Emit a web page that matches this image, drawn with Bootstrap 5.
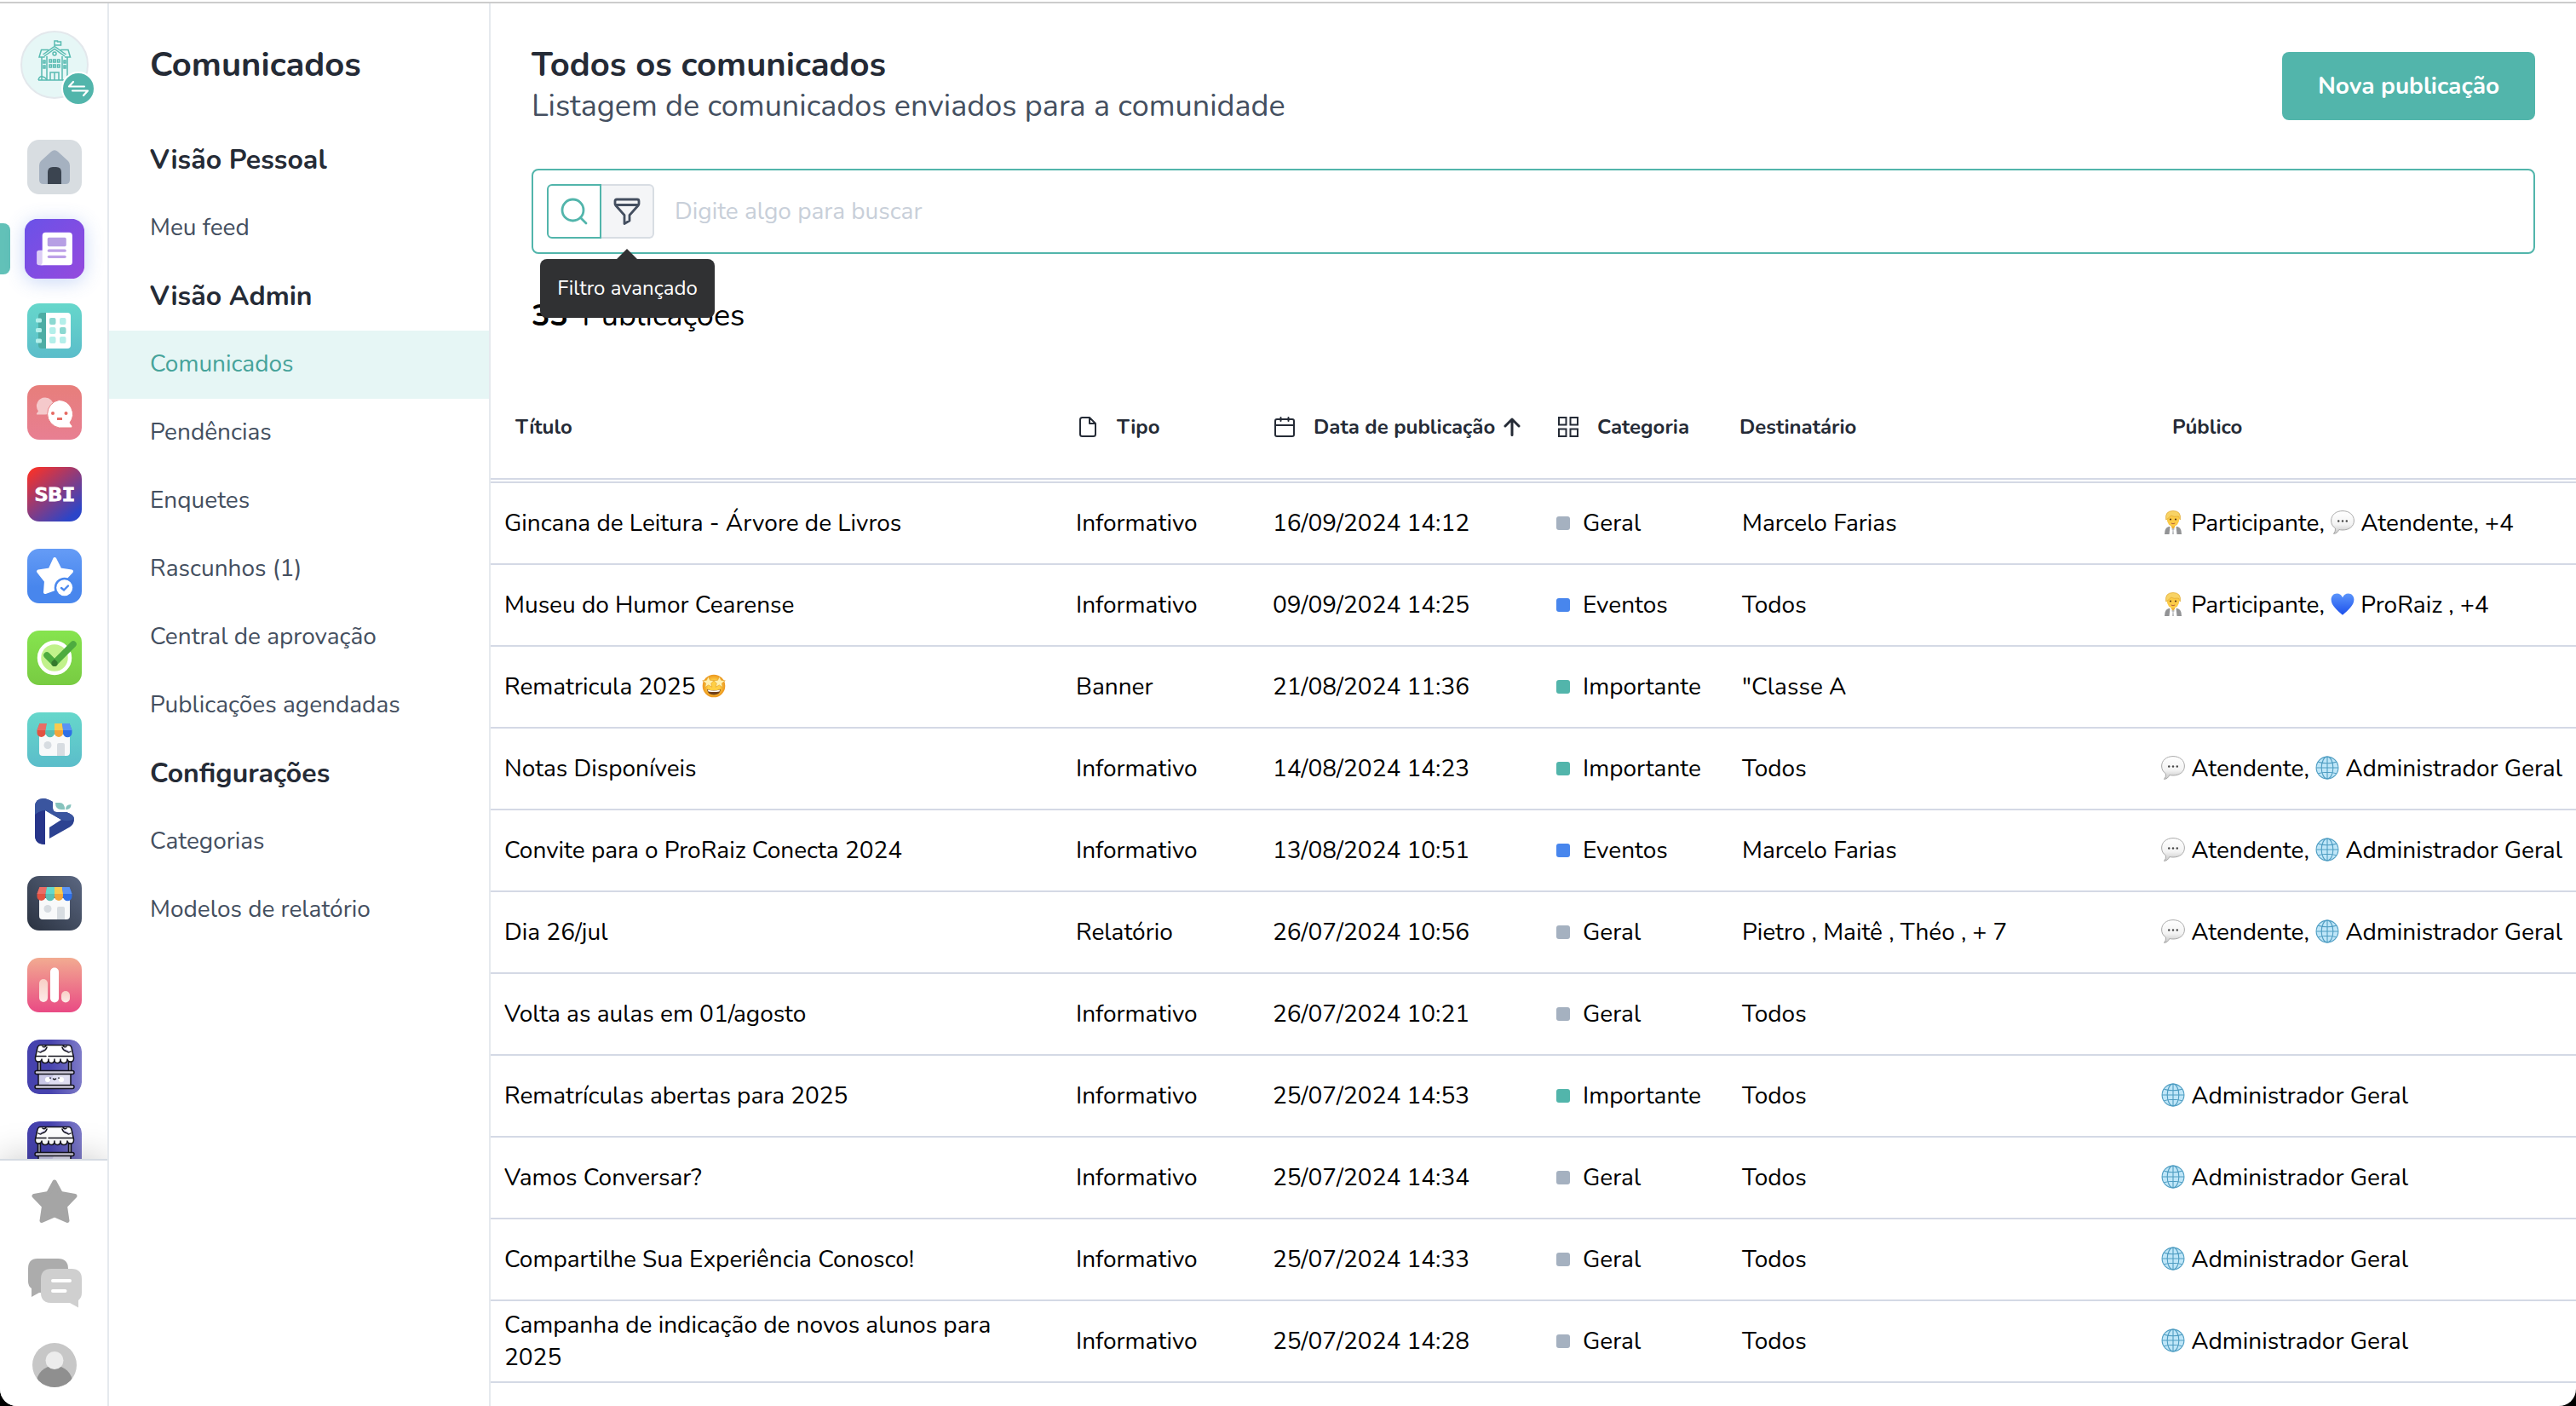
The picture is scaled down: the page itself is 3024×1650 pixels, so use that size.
<!DOCTYPE html>
<html lang="pt-BR">
<head>
<meta charset="utf-8">
<title>Comunicados</title>
<link href="https://cdn.jsdelivr.net/npm/bootstrap@5.3.0/dist/css/bootstrap.min.css" rel="stylesheet">
<style>
:root{--teal:#52b5ab;--ink:#252b36;--slate:#444f60;--line:#d4d9e5}
html,body{height:100%}
body{background:#000;font-family:Nunito,Lato,"Open Sans",sans-serif;font-size:28px;line-height:38px;color:#000;overflow:hidden}
svg{display:block;flex:none}
.app{height:1650px;background:#fff;border-radius:0 0 20px 20px;overflow:hidden;padding-top:2px}
.app-body{border-top:2px solid #ccc;height:100%}
.rail{width:128px;flex:none;border-right:2px solid #e5e9ee;overflow:hidden}
.school{width:80px;height:80px;margin:32px 0 48px 24px;background:#e6f7f6;border:2px solid #e3e8ec}
.swap{left:46px;top:46px;width:40px;height:40px;background:var(--teal);border:2px solid #fff}
.apps{gap:32px;padding-left:32px}
.tile{width:64px;height:64px;border-radius:14px}
.tile-on{transform:scale(1.1);box-shadow:0 3px 20px rgba(70,120,225,.3)}
.apps-wrap{height:1196px;overflow:hidden}
.marker{left:0;top:98px;width:12px;height:60px;background:#62c1b8;border-radius:0 8px 8px 0}
.rail-foot{flex:1;position:relative;border-top:2px solid #d5dbe2;background:#fff;box-shadow:0 0 40px rgba(0,0,0,.22);padding:22px 0 0 2px}
.foot-ic{margin-top:41px}
.side{width:448px;flex:none;border-right:2px solid #e5e9ee}
.side h1{font-size:40px;line-height:54px;font-weight:700;color:var(--ink);padding:45px 0 45px 48px;margin:0}
.side .nav-link{height:80px;line-height:78px;padding:0 0 0 48px;color:var(--slate)}
.side .grp{height:80px;line-height:79px;padding-left:48px;font-size:32px;font-weight:700;color:var(--ink)}
.side .nav-link.active{background:#e6f6f5;color:#46a39a}
.main-area{min-width:0}
.head{padding:44px 48px 0 48px;height:142px}
.head h2{font-size:40px;line-height:54px;font-weight:700;color:var(--ink);margin:1px 0 0}
.head p{font-size:36px;line-height:44px;color:var(--slate);margin:0}
.btn-new{background:var(--teal);color:#fff;font-size:28px;font-weight:700;width:297px;height:80px;border-radius:8px;margin-top:13px}
.search{margin:52px 48px 0;height:100px;border:2px solid var(--teal);border-radius:8px;padding:0 16px}
.sq{width:64px;height:64px;border:2px solid var(--teal);border-radius:6px 0 0 6px;background:#fff}
.sq-f{border-color:#d8dde3;border-left:0;border-radius:0 6px 6px 0;background:#f4f5f7;width:62px}
.ph{color:#c8cfd9;margin-left:24px}
.tip{left:-72px;top:86px;width:205px;height:69px;background:#303133;color:#fff;border-radius:8px;font-size:24px;line-height:68px;text-align:center;z-index:2}
.tip::before{content:"";position:absolute;left:90px;top:-12px;border:12px solid transparent;border-top:0;border-bottom-color:#303133}
.count{font-size:36px;line-height:48px;margin:49px 48px 0}
.count b{margin-right:16px}
.grid-t{table-layout:fixed;width:2448px;margin-top:55px;border-collapse:separate;border-spacing:0}
.grid-t th{height:117px;padding:0 0 9px 0;font-size:24px;font-weight:700;color:var(--ink);border-bottom:6px double var(--line);vertical-align:middle;white-space:nowrap}
.grid-t td{height:96px;padding:0 0 1px 16px;border-bottom:2px solid var(--line);vertical-align:middle;line-height:38px}
.grid-t td+td{white-space:nowrap}
.dot{width:16px;height:16px;border-radius:3px;margin-right:15px;flex:none}
.em{display:inline-block;width:28px;height:28px;vertical-align:-4px}
</style>
</head>
<body>
<svg width="0" height="0" class="position-absolute">
<defs>
<linearGradient id="gNews" x1="0" y1="0" x2="1" y2="1"><stop offset="0" stop-color="#6a52e8"/><stop offset="1" stop-color="#9549dd"/></linearGradient>
<linearGradient id="gTeal" x1="0" y1="0" x2="0" y2="1"><stop offset="0" stop-color="#66d7cb"/><stop offset="1" stop-color="#5bbdca"/></linearGradient>
<linearGradient id="gPink" x1="0" y1="0" x2="0" y2="1"><stop offset="0" stop-color="#e77e7b"/><stop offset="1" stop-color="#e87f92"/></linearGradient>
<linearGradient id="gSbi" x1=".1" y1="0" x2=".9" y2="1"><stop offset="0" stop-color="#fb3127"/><stop offset=".9" stop-color="#2c45c8"/></linearGradient>
<linearGradient id="gBlue" x1="0" y1="0" x2="0" y2="1"><stop offset="0" stop-color="#659cf6"/><stop offset=".7" stop-color="#4886ed"/></linearGradient>
<linearGradient id="gGreen" x1="0" y1="0" x2="0" y2="1"><stop offset="0" stop-color="#86e44e"/><stop offset="1" stop-color="#78cb42"/></linearGradient>
<linearGradient id="gDark" x1="1" y1="0" x2="0" y2="1"><stop offset="0" stop-color="#5b6781"/><stop offset="1" stop-color="#2a3240"/></linearGradient>
<linearGradient id="gChart" x1="0" y1="0" x2="0" y2="1"><stop offset="0" stop-color="#f2ab91"/><stop offset="1" stop-color="#e94a84"/></linearGradient>
<linearGradient id="gBar" x1="0" y1="0" x2="0" y2="1"><stop offset="0" stop-color="#f8cfc5"/><stop offset="1" stop-color="#fdebe8"/></linearGradient>
<linearGradient id="gStall" x1="0" y1="0" x2="1" y2="0"><stop offset=".4" stop-color="#4642ae"/><stop offset="1" stop-color="#7e7bc8"/></linearGradient>
<linearGradient id="gBub" x1="0" y1="0" x2="0" y2="1"><stop offset="0" stop-color="#fff"/><stop offset=".6" stop-color="#f3f3f3"/><stop offset="1" stop-color="#c4c4c4"/></linearGradient>
<linearGradient id="gHeart" x1="0" y1="0" x2="0" y2="1"><stop offset="0" stop-color="#5b95fb"/><stop offset="1" stop-color="#1c50ec"/></linearGradient>
<radialGradient id="gFace"><stop offset=".5" stop-color="#ffcf45"/><stop offset="1" stop-color="#ec961d"/></radialGradient>
<g id="shop">
 <path d="M14 26h36v21q0 4-4 4H18q-4 0-4-4z" fill="#f8f9fa"/>
 <circle cx="24" cy="38.5" r="4.5" fill="#d7dce1"/><path d="M35 38q0-2 2-2h5q2 0 2 2v13h-9z" fill="#d7dce1"/>
 <path d="M14.500 13H23L21.500 21v3a5 5 0 0 1-10 0v-3z" fill="#e25241"/><path d="M23 13h9v11a5 5 0 0 1-10.500 0v-3z" fill="#5abfb5"/><path d="M32 13h9l1 8v3a5 5 0 0 1-10 0z" fill="#f4a63b"/><path d="M41 13h8.500l3 8v3a5 5 0 0 1-10.500 0v-3z" fill="#2f6fe6"/>
 <path d="M14.500 13H23L21.500 21h-10z" fill="#e96d66"/><path d="M23 13h9v8H21.500z" fill="#64d8cc"/><path d="M32 13h9l1 8H32z" fill="#f8cb50"/><path d="M41 13h8.500l3 8H42z" fill="#5a93f5"/>
</g>
<g id="stall" stroke="#15151f" stroke-width="1.500" stroke-linejoin="round" stroke-linecap="round">
 <rect width="64" height="64" rx="14" fill="url(#gStall)" stroke="none"/>
 <path d="M12.500 26v12h3V26zM48.500 26v12h3V26z" fill="#a9a8b8"/>
 <rect x="13" y="40" width="38" height="14" fill="#c9c7e6"/><path d="M31 41h19v12H25z" fill="#dfdef2" stroke="none"/>
 <rect x="9" y="36.500" width="46" height="4" rx="2" fill="#cfcbdc"/><rect x="9" y="53.500" width="46" height="4" rx="2" fill="#cfcbdc"/>
 <path d="M15 6.500h34q2 0 3 3l2.500 11.500q.5 5-3.500 5-3.500 0-4-3 0 4.500-4 4.500T39 23q0 4.500-3.700 4.500T32 23q0 4.500-3.700 4.500T25 23q0 4.500-4 4.500T17 23q-.5 3-4 3-4 0-3.500-5L12 9.500q1-3 3-3z" fill="#fff"/>
 <path d="M10 19.500h12M25 19.500h29" fill="none"/>
 <path d="M13 14q3 2 4 0 5-1 6-5M18 8q2 2 4-1M51 14q-3 2-4 0-5-1-6-5M46 8q-2 2-4-1" fill="#d2cff0"/>
 <circle cx="24" cy="47" r="3" fill="#fff" stroke="none"/><circle cx="40" cy="47" r="3" fill="#fff" stroke="none"/>
 <path d="M27 45v.3M37 45v.3M30.500 46q1.500 1.500 3 0" fill="none"/>
</g>
<symbol id="ePerson" viewBox="0 0 28 28"><path d="M4 28q0-8 5-9h10q5 1 5 9z" fill="#929395"/><path d="M10.500 19h7l1 9h-9z" fill="#fff"/><path d="M14 20l-2 2 1.500 1-.5 5h2l-.5-5 1.500-1z" fill="#b9bbbe"/><path d="M12 16h4v4l-2 1.500-2-1.500z" fill="#eeb02f"/><ellipse cx="14" cy="10" rx="7.300" ry="8.700" fill="#fccb47"/><path d="M5.700 11Q4 .5 14 .5 24 .5 22.300 11l-1.800-4q-6 1-9-1-2 3-5.800 5z" fill="#f8d365" stroke="#dfa731" stroke-width=".7"/><circle cx="11" cy="10.500" r="1.100" fill="#5b3b13"/><circle cx="17" cy="10.500" r="1.100" fill="#5b3b13"/><path d="M11.800 15q2.200 1.500 4.400 0" stroke="#b5603a" fill="none"/></symbol>
<symbol id="eBub" viewBox="0 0 28 28"><path d="M14 .6c7.700 0 13.400 4.600 13.400 11.400S21.700 23 14 23c-1.500 0-3-.2-4.200-.5Q8 27 3.500 27.400 6 24.500 5.500 21 .6 17.700.6 12C.6 5.200 6.300.6 14 .6z" fill="url(#gBub)" stroke="#a9a9a9" stroke-width="1"/><circle cx="9.200" cy="12.500" r="1.200" fill="#444"/><circle cx="14" cy="12.500" r="1.200" fill="#444"/><circle cx="18.800" cy="12.500" r="1.200" fill="#444"/></symbol>
<symbol id="eGlobe" viewBox="0 0 28 28"><circle cx="14" cy="14" r="13.200" fill="#bfe6f8"/><g fill="none" stroke="#4f9dc2" stroke-width="1.100"><circle cx="14" cy="14" r="12.900"/><ellipse cx="14" cy="14" rx="6.800" ry="12.900"/><path d="M14 1.200v25.600M1.200 14h25.600M3.300 7.300q10.700 3 21.400 0M3.300 20.700q10.700-3 21.400 0"/></g></symbol>
<symbol id="eHeart" viewBox="0 0 28 28"><path d="M14 26.800C8 21.500.6 15.700.6 8.500.6 4.300 3.600 1.500 7.300 1.500c3 0 5.500 1.800 6.700 4.700 1.200-2.900 3.700-4.700 6.700-4.700 3.700 0 6.700 2.800 6.700 7 0 7.200-7.400 13-13.400 18.300z" fill="url(#gHeart)"/></symbol>
<symbol id="eStars" viewBox="0 0 28 28"><circle cx="14" cy="14" r="13.300" fill="url(#gFace)"/><path d="M6 18q8 2.500 16 0-1 6.500-8 6.500T6 18z" fill="#70401b"/><path d="M6.800 18.500q7.200 2 14.400 0l-.7 2q-6.500 1.200-13 0z" fill="#fff"/><g fill="#fff0b0" stroke="#e09a20" stroke-width=".6"><path d="M7.500 3l2 4.300 4.600.4-3.400 3.200 1.200 4.400-4.200-2.400-4 2.700.9-4.700L.7 7.800l4.700-.5z"/><path d="M20.500 3l-2 4.300-4.600.4 3.400 3.200-1.200 4.400 4.200-2.400 4 2.700-.9-4.700 3.900-3.100-4.700-.5z"/></g></symbol>
</defs>
</svg>

<div class="app">
<div class="app-body d-flex">
  <nav class="rail d-flex flex-column">
    <div class="school rounded-circle position-relative">
      <svg width="76" height="76" viewBox="0 0 76 76" fill="none" stroke="#58bbb1" stroke-width="1.500"><path d="M19 56h38M23 56V29l-3 0 2.500-8.500H31M53 56V29h3.500L54 20.500H45M19.500 29h7M50 29h7M29 56V28M47 56V28M26 28l12-8.500L50 28M24.500 26L38 16.500 51.500 26M38 17v-7h3.500v1h4v4H38"/><circle cx="38" cy="25" r="2"/><path d="M33 56v-9h10v9M38 47v9M32 32h2.500v3H32zM36.700 32h2.500v3h-2.500zM41.500 32H44v3h-2.500zM32 38h2.500v3H32zM36.700 38h2.500v3h-2.500zM41.500 38H44v3h-2.500zM25 33h2v3h-2zM49 33h2v3h-2zM25 39h2v3h-2zM49 39h2v3h-2z"/><path d="M19 56q1-5 5-4 4 1 5 4"/></svg>
      <div class="swap rounded-circle position-absolute d-flex align-items-center justify-content-center"><svg width="26" height="20" viewBox="0 0 26 20" fill="none" stroke="#fff" stroke-width="2.200" stroke-linecap="round" stroke-linejoin="round"><path d="M7 2L2 7.500h18M6 12.500h18L19 18"/></svg></div>
    </div>
    <div class="apps-wrap position-relative">
      <div class="marker position-absolute"></div>
      <div class="apps d-flex flex-column">
        <svg class="tile" viewBox="0 0 64 64"><rect width="64" height="64" fill="#d8dde1"/><path d="M14 30q0-3 2-5L28 14q4-3.500 8 0l12 11q2 2 2 5v17q0 5-5 5H19q-5 0-5-5z" fill="#a5b1c0"/><path d="M24 52V38q0-6 6-6h4q6 0 6 6v14z" fill="#3b4450"/></svg>
        <svg class="tile tile-on" viewBox="0 0 64 64"><rect width="64" height="64" fill="url(#gNews)"/><rect x="13" y="33.500" width="9" height="16" rx="2.500" fill="#dccdf6"/><path d="M19 18q0-3.500 3.500-3.500h25Q51 14.500 51 18v28q0 3.500-3.500 3.500H16.500Q19 49 19 46z" fill="#fff"/><rect x="24.500" y="20" width="20" height="9.500" rx="1.500" fill="#b79fe4"/><rect x="24.500" y="32.500" width="20" height="3" rx="1.500" fill="#bda0e8"/><rect x="24.500" y="39" width="20" height="3" rx="1.500" fill="#bda0e8"/></svg>
        <svg class="tile" viewBox="0 0 64 64"><rect width="64" height="64" fill="url(#gTeal)"/><path d="M17 11h5v42h-5q-4 0-4-4V15q0-4 4-4z" fill="#4dada4"/><path d="M22 11h25q4 0 4 4v34q0 4-4 4H22z" fill="#fff"/><g fill="#b4efea"><rect x="10" y="17.500" width="7" height="5" rx="1.500"/><rect x="10" y="29" width="7" height="5" rx="1.500"/><rect x="10" y="41.500" width="7" height="5" rx="1.500"/><rect x="38" y="17" width="7.500" height="8" rx="2"/><rect x="26" y="28" width="7.500" height="8" rx="2"/><rect x="26" y="39" width="7.500" height="8" rx="2"/><rect x="38" y="39" width="7.500" height="8" rx="2"/></g><rect x="26" y="17" width="7.500" height="8" rx="2" fill="#8cd8d1"/><rect x="38" y="28" width="7.500" height="8" rx="2" fill="#8cd8d1"/></svg>
        <svg class="tile" viewBox="0 0 64 64"><rect width="64" height="64" fill="url(#gPink)"/><path d="M21 14.500a10 10 0 0 1 0 20H12q-2 0-.5-2l1.500-2A10 10 0 0 1 21 14.500z" fill="#f5c9cb"/><path d="M37.300 17.500a16.500 16.500 0 0 0 0 32.500H52q2-.5.500-2.500L50 44A16.500 16.500 0 0 0 37.300 17.500z" fill="#fff" stroke="#e77e83" stroke-width="1"/><circle cx="30" cy="33" r="2" fill="#e66a62"/><circle cx="45.500" cy="33" r="2" fill="#e66a62"/><rect x="35" y="38" width="6" height="3" rx=".5" fill="#e66a62"/></svg>
        <svg class="tile" viewBox="0 0 64 64"><rect width="64" height="64" fill="url(#gSbi)"/><text x="8.500" y="40" font-family="DejaVu Sans Mono" font-weight="700" font-size="22" textLength="48" lengthAdjust="spacingAndGlyphs" fill="#fff" stroke="#fff" stroke-width=".8">SBI</text></svg>
        <svg class="tile" viewBox="0 0 64 64"><rect width="64" height="64" fill="url(#gBlue)"/><path d="M32.200 12l6.300 12.500L52 26.500l-9 9.500-4 10-7 1-11 4L22 38 13 26.500l13.500-2z" fill="#fff" stroke="#fff" stroke-width="4" stroke-linejoin="round"/><circle cx="43.700" cy="45.700" r="12" fill="#4a88ee"/><circle cx="43.700" cy="45.700" r="9.500" fill="#fff"/><path d="M40 46l3 2.500 5-5" fill="none" stroke="#4a88ee" stroke-width="2.400" stroke-linecap="round"/></svg>
        <svg class="tile" viewBox="0 0 64 64"><rect width="64" height="64" fill="url(#gGreen)"/><circle cx="32" cy="32" r="18" fill="#c1f28b" stroke="#fff" stroke-width="4.500"/><path d="M23 29l9 9 22-22" fill="none" stroke="#4dab3f" stroke-width="7.500" stroke-linecap="round" stroke-linejoin="round"/><path d="M32 33.500l3.500 3.500q1 5-3.500 5t-3.500-5z" fill="#33792c"/></svg>
        <svg class="tile" viewBox="0 0 64 64"><rect width="64" height="64" fill="url(#gTeal)"/><use href="#shop"/></svg>
        <svg class="tile" viewBox="0 0 64 64"><path d="M21 59q-12 0-12-11V15Q9 5 19 5q4 0 11 4v7q0 5 5 5h11q9 3 9 9 0 5-5 8.500L26 52V39l14-9L21 19z" fill="#2c4291"/><path d="M21 59q-12 0-12-11V24q6-5 12-5z" fill="#27358a"/><path d="M9 24V15Q9 5 19 5q4 0 11 4v7q0 5 5 5h11q9 3 9 8-7 4-15 1L21 19q-6 0-12 5z" fill="#3a559f"/><path d="M33 10h5q6 0 6 8h-4q-7 0-7-8zM45 18q0-6 6.500-6 0 6-6.500 6z" fill="#86c3bd"/></svg>
        <svg class="tile" viewBox="0 0 64 64"><rect width="64" height="64" fill="url(#gDark)"/><use href="#shop"/></svg>
        <svg class="tile" viewBox="0 0 64 64"><rect width="64" height="64" fill="url(#gChart)"/><rect x="14" y="25" width="10" height="27" rx="5" fill="url(#gBar)"/><rect x="27" y="11.500" width="10" height="41" rx="5" fill="#fff"/><rect x="40" y="39" width="10" height="13.500" rx="5" fill="url(#gBar)"/></svg>
        <svg class="tile" viewBox="0 0 64 64"><use href="#stall"/></svg>
        <svg class="tile" viewBox="0 0 64 64"><use href="#stall"/></svg>
      </div>
    </div>
    <div class="rail-foot">
      <svg class="mx-auto" width="54" height="52" viewBox="0 0 54 52"><path d="M27 3l7.300 13.500L51 19.500 39.500 31.500 42 48.500 27 42 12 48.500l2.500-17L3 19.500l16.700-3z" fill="#a5a5a5" stroke="#a5a5a5" stroke-width="5" stroke-linejoin="round"/></svg>
      <svg class="mx-auto foot-ic" width="64" height="58" viewBox="0 0 64 58"><path d="M12 0h24q12 0 12 12v16q0 12-12 12H14l-9 5V35Q1 32 1 27V12Q1 0 12 0z" fill="#acacac"/><path d="M28 12h24q12 0 12 12v16q0 6-4 9v8.500L50 52H28q-12 0-12-12V24q0-12 12-12z" fill="#cfcfcf"/><path d="M30 26h20M30 38h14.500" stroke="#fff" stroke-width="4" stroke-linecap="round"/></svg>
      <svg class="mx-auto foot-ic" width="52" height="52" viewBox="0 0 52 52"><clipPath id="av"><circle cx="26" cy="26" r="26"/></clipPath><g clip-path="url(#av)"><rect width="52" height="52" fill="#c7c7c7"/><circle cx="26" cy="48" r="21.500" fill="#8f8f8f"/><circle cx="26" cy="20.500" r="10.500" fill="#ececec"/></g></svg>
    </div>
  </nav>

  <aside class="side">
    <h1>Comunicados</h1>
    <div class="nav flex-column">
      <div class="grp">Visão Pessoal</div>
      <a class="nav-link">Meu feed</a>
      <div class="grp">Visão Admin</div>
      <a class="nav-link active">Comunicados</a>
      <a class="nav-link">Pendências</a>
      <a class="nav-link">Enquetes</a>
      <a class="nav-link">Rascunhos (1)</a>
      <a class="nav-link">Central de aprovação</a>
      <a class="nav-link">Publicações agendadas</a>
      <div class="grp">Configurações</div>
      <a class="nav-link">Categorias</a>
      <a class="nav-link">Modelos de relatório</a>
    </div>
  </aside>

  <main class="main-area flex-grow-1">
    <div class="head d-flex justify-content-between align-items-start">
      <div><h2>Todos os comunicados</h2><p>Listagem de comunicados enviados para a comunidade</p></div>
      <button class="btn btn-new">Nova publicação</button>
    </div>
    <div class="search d-flex align-items-center">
      <div class="sq d-flex align-items-center justify-content-center"><svg width="32" height="32" viewBox="0 0 32 32" fill="none" stroke="#52b5ab" stroke-width="2.800" stroke-linecap="round"><circle cx="14.500" cy="14.500" r="12.500"/><path d="M24 24l6 6"/></svg></div>
      <div class="sq sq-f position-relative d-flex align-items-center justify-content-center">
        <svg width="32" height="32" viewBox="0 0 32 32" fill="none" stroke="#444f60" stroke-width="2.800" stroke-linejoin="round"><path d="M4 2h24q2 0 2 2v3q0 1-.7 2L19 20.500V27l-6 3.500v-10L2.700 9Q2 8 2 7V4q0-2 2-2zM2 8.500h28"/></svg>
        <div class="tip position-absolute">Filtro avançado</div>
      </div>
      <span class="ph">Digite algo para buscar</span>
    </div>
    <div class="count"><b>33</b>Publicações</div>
    <table class="grid-t">
      <colgroup><col style="width:671px"><col style="width:231px"><col style="width:333px"><col style="width:218px"><col style="width:492px"><col style="width:503px"></colgroup>
      <thead><tr>
        <th style="padding-left:29px">Título</th>
        <th style="padding-left:20px"><div class="d-flex align-items-center"><svg width="20" height="24" viewBox="0 0 20 24" fill="none" stroke="#252b36" stroke-width="2" stroke-linejoin="round"><path d="M3.500 1H12l7 7v12.500q0 2.500-2.500 2.500h-13Q1 23 1 20.500v-17Q1 1 3.500 1zM12 1v7h7"/></svg><span style="margin-left:24px">Tipo</span></div></th>
        <th style="padding-left:18px"><div class="d-flex align-items-center"><svg width="24" height="24" viewBox="0 0 24 24" fill="none" stroke="#252b36" stroke-width="2" stroke-linecap="round"><rect x="1" y="3" width="22" height="20" rx="2"/><path d="M1 10h22M7.500 1v4M16.500 1v4"/></svg><span style="margin:0 10px 0 22px">Data de publicação</span><svg width="20" height="22" viewBox="0 0 20 22" fill="none" stroke="#252b36" stroke-width="3" stroke-linecap="round" stroke-linejoin="round"><path d="M10 20.500V2M2 10l8-8 8 8"/></svg></div></th>
        <th style="padding-left:18px"><div class="d-flex align-items-center"><svg width="24" height="24" viewBox="0 0 24 24" fill="none" stroke="#252b36" stroke-width="2"><path d="M1 1h8.500v8.500H1zM14.500 1H23v8.500h-8.500zM1 14.500h8.500V23H1zM14.500 14.500H23V23h-8.500z"/></svg><span style="margin-left:22px">Categoria</span></div></th>
        <th style="padding-left:13px">Destinatário</th>
        <th style="padding-left:29px">Público</th>
      </tr></thead>
      <tbody id="rows"></tbody>
    </table>
  </main>
</div>
</div>
<script src="https://cdn.jsdelivr.net/npm/bootstrap@5.3.0/dist/js/bootstrap.bundle.min.js"></script>
<script>
const em = id => `<svg class="em"><use href="#${id}"/></svg> `;
const colors = {Geral: '#a5b1c0', Eventos: '#4886ed', Importante: '#52b5ab'};
const adm = em('eGlobe') + 'Administrador Geral';
const both = em('eBub') + 'Atendente, ' + adm;
const data = [
  ['Gincana de Leitura - Árvore de Livros', 'Informativo', '16/09/2024 14:12', 'Geral', 'Marcelo Farias', em('ePerson') + 'Participante, ' + em('eBub') + 'Atendente, +4'],
  ['Museu do Humor Cearense', 'Informativo', '09/09/2024 14:25', 'Eventos', 'Todos', em('ePerson') + 'Participante, ' + em('eHeart') + 'ProRaiz , +4'],
  ['Rematricula 2025 ' + em('eStars'), 'Banner', '21/08/2024 11:36', 'Importante', '"Classe A', ''],
  ['Notas Disponíveis', 'Informativo', '14/08/2024 14:23', 'Importante', 'Todos', both],
  ['Convite para o ProRaiz Conecta 2024', 'Informativo', '13/08/2024 10:51', 'Eventos', 'Marcelo Farias', both],
  ['Dia 26/jul', 'Relatório', '26/07/2024 10:56', 'Geral', 'Pietro , Maitê , Théo , + 7', both],
  ['Volta as aulas em 01/agosto', 'Informativo', '26/07/2024 10:21', 'Geral', 'Todos', ''],
  ['Rematrículas abertas para 2025', 'Informativo', '25/07/2024 14:53', 'Importante', 'Todos', adm],
  ['Vamos Conversar?', 'Informativo', '25/07/2024 14:34', 'Geral', 'Todos', adm],
  ['Compartilhe Sua Experiência Conosco!', 'Informativo', '25/07/2024 14:33', 'Geral', 'Todos', adm],
  ['Campanha de indicação de novos alunos para<br>2025', 'Informativo', '25/07/2024 14:28', 'Geral', 'Todos', adm]
];
document.getElementById('rows').innerHTML = data.map(r =>
  `<tr><td>${r[0]}</td><td>${r[1]}</td><td>${r[2]}</td>
  <td><div class="d-flex align-items-center"><span class="dot" style="background:${colors[r[3]]}"></span>${r[3]}</div></td>
  <td>${r[4]}</td><td>${r[5]}</td></tr>`).join('');
</script>
</body>
</html>
